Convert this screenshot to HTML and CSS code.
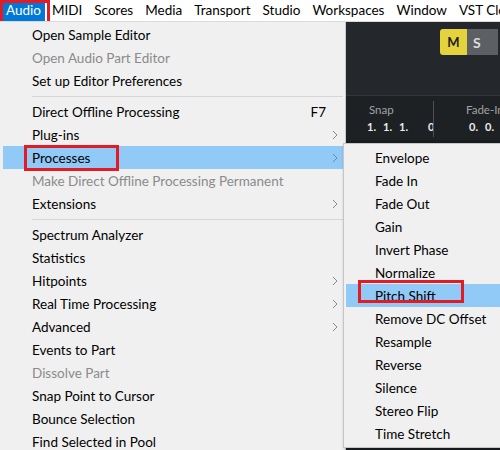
FILE: index.html
```html
<!DOCTYPE html>
<html>
<head>
<meta charset="utf-8">
<link rel="stylesheet" href="styles.css">
</head>
<body>
<div class="app">
  <nav class="menubar">
    <span class="mb-item active">Audio<span class="annot annot-audio"></span></span>
    <span class="mb-item">MIDI</span>
    <span class="mb-item">Scores</span>
    <span class="mb-item">Media</span>
    <span class="mb-item">Transport</span>
    <span class="mb-item">Studio</span>
    <span class="mb-item">Workspaces</span>
    <span class="mb-item">Window</span>
    <span class="mb-item">VST Cloud</span>
  </nav>
  <div class="workspace">
    <div class="ws-left"></div>
    <div class="ws-right">
      <div class="toolbar">
        <div class="ms"><span class="btn-m">M</span><span class="btn-s">S</span></div>
      </div>
      <div class="infoline">
        <div class="cell snap">
          <span class="lbl">Snap</span>
          <span class="val"><span>1.</span><span>1.</span><span>1.</span><span class="last">0</span></span>
        </div>
        <div class="cell fade">
          <span class="lbl">Fade-In</span>
          <span class="val"><span>0.</span><span>0.</span><span>0.</span></span>
        </div>
      </div>
      <div class="rest"></div>
    </div>
  </div>

  <div class="menu main">
    <div class="item"><span class="label">Open Sample Editor</span></div>
    <div class="item disabled"><span class="label">Open Audio Part Editor</span></div>
    <div class="item"><span class="label">Set up Editor Preferences</span></div>
    <div class="sep"></div>
    <div class="item"><span class="label">Direct Offline Processing</span><span class="key">F7</span><span class="arrow"></span></div>
    <div class="item"><span class="label">Plug-ins</span><span class="arrow"><svg width="6" height="10" viewBox="0 0 6 10"><path d="M1 1l4 4-4 4" fill="none" stroke="#8a8a8a"/></svg></span></div>
    <div class="item hl"><span class="label">Processes</span><span class="arrow"><svg width="6" height="10" viewBox="0 0 6 10"><path d="M1 1l4 4-4 4" fill="none" stroke="#7a8a9a"/></svg></span><span class="annot annot-proc"></span></div>
    <div class="item disabled"><span class="label">Make Direct Offline Processing Permanent</span></div>
    <div class="item"><span class="label">Extensions</span><span class="arrow"><svg width="6" height="10" viewBox="0 0 6 10"><path d="M1 1l4 4-4 4" fill="none" stroke="#8a8a8a"/></svg></span></div>
    <div class="sep"></div>
    <div class="item"><span class="label">Spectrum Analyzer</span></div>
    <div class="item"><span class="label">Statistics</span></div>
    <div class="item"><span class="label">Hitpoints</span><span class="arrow"><svg width="6" height="10" viewBox="0 0 6 10"><path d="M1 1l4 4-4 4" fill="none" stroke="#8a8a8a"/></svg></span></div>
    <div class="item"><span class="label">Real Time Processing</span><span class="arrow"><svg width="6" height="10" viewBox="0 0 6 10"><path d="M1 1l4 4-4 4" fill="none" stroke="#8a8a8a"/></svg></span></div>
    <div class="item"><span class="label">Advanced</span><span class="arrow"><svg width="6" height="10" viewBox="0 0 6 10"><path d="M1 1l4 4-4 4" fill="none" stroke="#8a8a8a"/></svg></span></div>
    <div class="item"><span class="label">Events to Part</span></div>
    <div class="item disabled"><span class="label">Dissolve Part</span></div>
    <div class="item"><span class="label">Snap Point to Cursor</span></div>
    <div class="item"><span class="label">Bounce Selection</span></div>
    <div class="item"><span class="label">Find Selected in Pool</span></div>
  </div>

  <div class="menu sub">
    <div class="item"><span class="label">Envelope</span></div>
    <div class="item"><span class="label">Fade In</span></div>
    <div class="item"><span class="label">Fade Out</span></div>
    <div class="item"><span class="label">Gain</span></div>
    <div class="item"><span class="label">Invert Phase</span></div>
    <div class="item"><span class="label">Normalize</span></div>
    <div class="item hl"><span class="label">Pitch Shift</span><span class="annot annot-pitch"></span></div>
    <div class="item"><span class="label">Remove DC Offset</span></div>
    <div class="item"><span class="label">Resample</span></div>
    <div class="item"><span class="label">Reverse</span></div>
    <div class="item"><span class="label">Silence</span></div>
    <div class="item"><span class="label">Stereo Flip</span></div>
    <div class="item"><span class="label">Time Stretch</span></div>
  </div>
</div>
</body>
</html>
```

FILE: styles.css
```css
html, body {
  margin: 0;
  padding: 0;
}
body {
  width: 500px;
  height: 450px;
  overflow: hidden;
  font-family: Lato, "Noto Sans", sans-serif;
  font-size: 13.5px;
  color: #000;
}
.app {
  position: relative;
  width: 500px;
  height: 450px;
  display: flex;
  flex-direction: column;
  overflow: hidden;
}

/* menu bar */
.menubar {
  height: 21px;
  border-bottom: 1px solid #dadada;
  background: #fff;
  display: flex;
  align-items: stretch;
  gap: 4px;
  padding-left: 2px;
  white-space: nowrap;
  overflow: hidden;
}
.mb-item {
  flex: none;
  padding: 0 4px;
  display: flex;
  align-items: center;
  line-height: 1;
}
.mb-item.active {
  background: #0078d7;
  color: #fff;
  position: relative;
  margin-right: -1px;
}

.annot {
  position: absolute;
  box-sizing: border-box;
  border: 3px solid #e31b24;
  pointer-events: none;
}
.annot-audio {
  left: -2px;
  top: 0;
  width: 50px;
  height: 27px;
}
.annot-proc {
  left: 21px;
  top: -1px;
  width: 95px;
  height: 26px;
}
.annot-pitch {
  left: 12px;
  top: -4px;
  width: 106px;
  height: 23px;
}

/* dark workspace behind menus */
.workspace {
  flex: 1;
  display: flex;
  background: #24282c;
}
.ws-left {
  flex: none;
  width: 346px;
}
.ws-right {
  flex: 1;
  min-width: 0;
  display: flex;
  flex-direction: column;
}
.toolbar {
  height: 73px;
  display: flex;
  justify-content: flex-end;
  align-items: flex-start;
  padding-top: 7px;
  padding-right: 2px;
  box-sizing: border-box;
}
.ms {
  display: flex;
  height: 26px;
}
.btn-m {
  width: 27px;
  background: #e4d33c;
  color: #1e1e1e;
  font-weight: 700;
  font-size: 13px;
  border-radius: 3px 0 0 3px;
  display: flex;
  align-items: center;
  justify-content: center;
}
.btn-s {
  width: 31px;
  box-sizing: border-box;
  padding-left: 6px;
  background: #5c5f63;
  color: #dcdcdc;
  font-weight: 700;
  font-size: 14px;
  display: flex;
  align-items: center;
}
.infoline {
  height: 45px;
  background: #1e2124;
  border-top: 1px solid #34383c;
  display: flex;
  box-sizing: border-box;
}
.cell {
  display: flex;
  flex-direction: column;
  margin: 5px 0 3px;
  padding-top: 2px;
  white-space: nowrap;
  overflow: hidden;
}
.cell.snap {
  flex: none;
  width: 87px;
  border-right: 1px solid #4d5054;
}
.cell.fade {
  flex: 1;
  min-width: 0;
}
.lbl {
  font-size: 11.5px;
  line-height: 14px;
  color: #a2a2a2;
}
.val {
  margin-top: 3px;
  display: flex;
  gap: 7px;
  font-size: 11px;
  line-height: 14px;
  font-weight: 700;
  color: #ececec;
}
.val .last {
  margin-left: 13px;
}
.snap .lbl { padding-left: 23px; }
.snap .val { padding-left: 21px; }
.fade .lbl { padding-left: 32px; }
.fade .val { padding-left: 35px; }
.rest {
  flex: 1;
  background: #1b1e21;
}

/* menus */
.menu {
  position: absolute;
  background: #f0f0f0;
  box-sizing: border-box;
  white-space: nowrap;
}
.menu.main {
  left: 0;
  top: 22px;
  width: 346px;
  height: 440px;
  border-right: 1px solid #cacaca;
  padding: 1px 2px 0 3px;
}
.menu.sub {
  left: 343px;
  top: 143px;
  width: 170px;
  border: 1px solid #c6c6c6;
  padding: 2px 0 2px 2px;
  box-shadow: 1px 1px 3px rgba(0, 0, 0, 0.25);
}
.item {
  height: 23px;
  display: flex;
  align-items: center;
  position: relative;
}
.item.hl {
  background: #91c9f7;
}
.item.disabled {
  color: #8b8b8b;
}
.label {
  flex: 1;
  padding-left: 29px;
}
.key {
  padding-right: 1px;
}
.arrow {
  width: 16px;
  height: 23px;
  display: flex;
  align-items: center;
  justify-content: center;
}
.sep {
  height: 8px;
  display: flex;
  align-items: center;
  padding-left: 29px;
}
.sep::before {
  content: "";
  flex: 1;
  height: 1px;
  background: #d6d6d6;
}
```
